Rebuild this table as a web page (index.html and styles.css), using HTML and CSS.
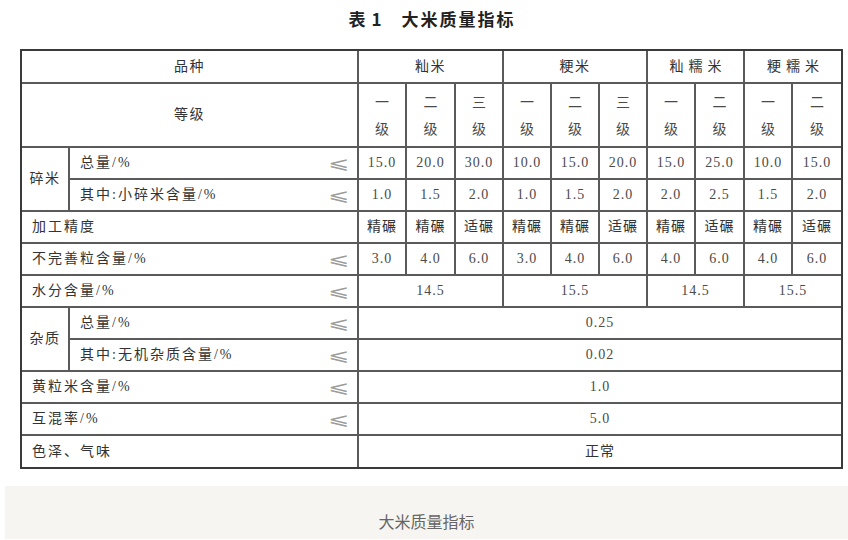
FILE: index.html
```html
<!DOCTYPE html>
<html lang="zh-CN">
<head>
<meta charset="utf-8">
<title>大米质量指标</title>
<link rel="stylesheet" href="styles.css">
</head>
<body>
<div class="page">
  <h1 class="title"><span class="t-a">表</span><span class="t-b">1</span><span class="t-c">大米质量指标</span></h1>
  <table class="grid">
    <colgroup>
      <col class="c-grp"><col class="c-lab">
      <col class="c-d"><col class="c-d1"><col class="c-d">
      <col class="c-d"><col class="c-d"><col class="c-d">
      <col class="c-d"><col class="c-d1">
      <col class="c-d"><col class="c-d2">
    </colgroup>
    <tr class="r-h1">
      <td colspan="2" class="ctr">品种</td>
      <td colspan="3" class="ctr">籼米</td>
      <td colspan="3" class="ctr">粳米</td>
      <td colspan="2" class="ctr wide">籼糯米</td>
      <td colspan="2" class="ctr wide">粳糯米</td>
    </tr>
    <tr class="r-h2">
      <td colspan="2" class="ctr">等级</td>
      <td class="gr">一<br>级</td><td class="gr">二<br>级</td><td class="gr">三<br>级</td>
      <td class="gr">一<br>级</td><td class="gr">二<br>级</td><td class="gr">三<br>级</td>
      <td class="gr">一<br>级</td><td class="gr">二<br>级</td>
      <td class="gr">一<br>级</td><td class="gr">二<br>级</td>
    </tr>
    <tr>
      <td rowspan="2" class="ctr grp">碎米</td>
      <td class="lab"><div class="lab-in"><span>总量/%</span><span class="le">⩽</span></div></td>
      <td class="num">15.0</td><td class="num">20.0</td><td class="num">30.0</td>
      <td class="num">10.0</td><td class="num">15.0</td><td class="num">20.0</td>
      <td class="num">15.0</td><td class="num">25.0</td>
      <td class="num">10.0</td><td class="num">15.0</td>
    </tr>
    <tr>
      <td class="lab"><div class="lab-in"><span>其中:小碎米含量/%</span><span class="le">⩽</span></div></td>
      <td class="num">1.0</td><td class="num">1.5</td><td class="num">2.0</td>
      <td class="num">1.0</td><td class="num">1.5</td><td class="num">2.0</td>
      <td class="num">2.0</td><td class="num">2.5</td>
      <td class="num">1.5</td><td class="num">2.0</td>
    </tr>
    <tr>
      <td colspan="2" class="lab">加工精度</td>
      <td class="txt">精碾</td><td class="txt">精碾</td><td class="txt">适碾</td>
      <td class="txt">精碾</td><td class="txt">精碾</td><td class="txt">适碾</td>
      <td class="txt">精碾</td><td class="txt">适碾</td>
      <td class="txt">精碾</td><td class="txt">适碾</td>
    </tr>
    <tr>
      <td colspan="2" class="lab"><div class="lab-in"><span>不完善粒含量/%</span><span class="le">⩽</span></div></td>
      <td class="num">3.0</td><td class="num">4.0</td><td class="num">6.0</td>
      <td class="num">3.0</td><td class="num">4.0</td><td class="num">6.0</td>
      <td class="num">4.0</td><td class="num">6.0</td>
      <td class="num">4.0</td><td class="num">6.0</td>
    </tr>
    <tr>
      <td colspan="2" class="lab"><div class="lab-in"><span>水分含量/%</span><span class="le">⩽</span></div></td>
      <td colspan="3" class="num">14.5</td>
      <td colspan="3" class="num">15.5</td>
      <td colspan="2" class="num">14.5</td>
      <td colspan="2" class="num">15.5</td>
    </tr>
    <tr>
      <td rowspan="2" class="ctr grp">杂质</td>
      <td class="lab"><div class="lab-in"><span>总量/%</span><span class="le">⩽</span></div></td>
      <td colspan="10" class="num">0.25</td>
    </tr>
    <tr>
      <td class="lab"><div class="lab-in"><span>其中:无机杂质含量/%</span><span class="le">⩽</span></div></td>
      <td colspan="10" class="num">0.02</td>
    </tr>
    <tr>
      <td colspan="2" class="lab"><div class="lab-in"><span>黄粒米含量/%</span><span class="le">⩽</span></div></td>
      <td colspan="10" class="num">1.0</td>
    </tr>
    <tr>
      <td colspan="2" class="lab"><div class="lab-in"><span>互混率/%</span><span class="le">⩽</span></div></td>
      <td colspan="10" class="num">5.0</td>
    </tr>
    <tr class="r-last">
      <td colspan="2" class="lab">色泽、气味</td>
      <td colspan="10" class="txt">正常</td>
    </tr>
  </table>
  <div class="caption">大米质量指标</div>
</div>
</body>
</html>
```

FILE: styles.css
```css
html, body {
  margin: 0;
  padding: 0;
  background: #ffffff;
}

.page {
  width: 848px;
  font-family: "Liberation Serif", "Noto Sans CJK SC", serif;
  color: #333333;
}

.title {
  margin: 0;
  padding-top: 7px;
  height: 24px;
  line-height: 24px;
  display: flex;
  justify-content: center;
  font-family: "Noto Sans CJK SC", sans-serif;
  font-size: 17px;
  font-weight: 700;
  color: #222222;
  padding-left: 16px;
}

.t-a { margin-right: 6px; }
.t-b { margin-right: 20px; }
.t-c { letter-spacing: 2px; }

.grid {
  margin: 18px 0 0 20px;
  width: 823px;
  table-layout: fixed;
  border-collapse: separate;
  border-spacing: 0;
  border: 2px solid #3a3a3a;
  font-size: 14px;
}

.c-grp { width: 48px; }
.c-lab { width: 289px; }
.c-d { width: 48px; }
.c-d1 { width: 49px; }
.c-d2 { width: 48px; }

.grid td {
  box-sizing: border-box;
  border-right: 2px solid #5a5a5a;
  border-bottom: 2px solid #5a5a5a;
  padding: 0;
  height: 32px;
  vertical-align: middle;
  line-height: 20px;
}

.grid tr td:last-child { border-right: none; }
.grid tr:last-child td { border-bottom: none; }
.grid td.grp { border-bottom: 2px solid #5a5a5a; }

.grid .r-h1 td { height: 33px; }
.grid .r-h2 td { height: 64px; }
.grid .r-last td { height: 31px; }

.ctr {
  text-align: center;
  letter-spacing: 1.5px;
  color: #333333;
}

.wide { letter-spacing: 5px; padding-left: 5px !important; }

.gr {
  text-align: center;
  line-height: 27px !important;
  color: #4a4a4a;
  padding-top: 2px !important;
}

.lab {
  padding: 0 8px 0 10px !important;
  letter-spacing: 2px;
  color: #333333;
}

.lab-in {
  display: flex;
  justify-content: space-between;
  align-items: center;
}

.le {
  display: inline-block;
  font-family: "DejaVu Sans", sans-serif;
  font-size: 17px;
  font-weight: 200;
  line-height: 20px;
  letter-spacing: 0;
  color: #9a9a9a;
  transform: scaleX(1.5);
  transform-origin: right center;
}

.num {
  text-align: center;
  letter-spacing: 1px;
  color: #4a4a4a;
}

.txt {
  text-align: center;
  letter-spacing: 1px;
  color: #333333;
}

.caption {
  margin: 17px 0 0 5px;
  height: 53px;
  box-sizing: border-box;
  padding-top: 23px;
  background: #f6f5f1;
  text-align: center;
  font-family: "Noto Sans CJK SC", sans-serif;
  font-size: 16px;
  line-height: 24px;
  color: #666666;
}
```
